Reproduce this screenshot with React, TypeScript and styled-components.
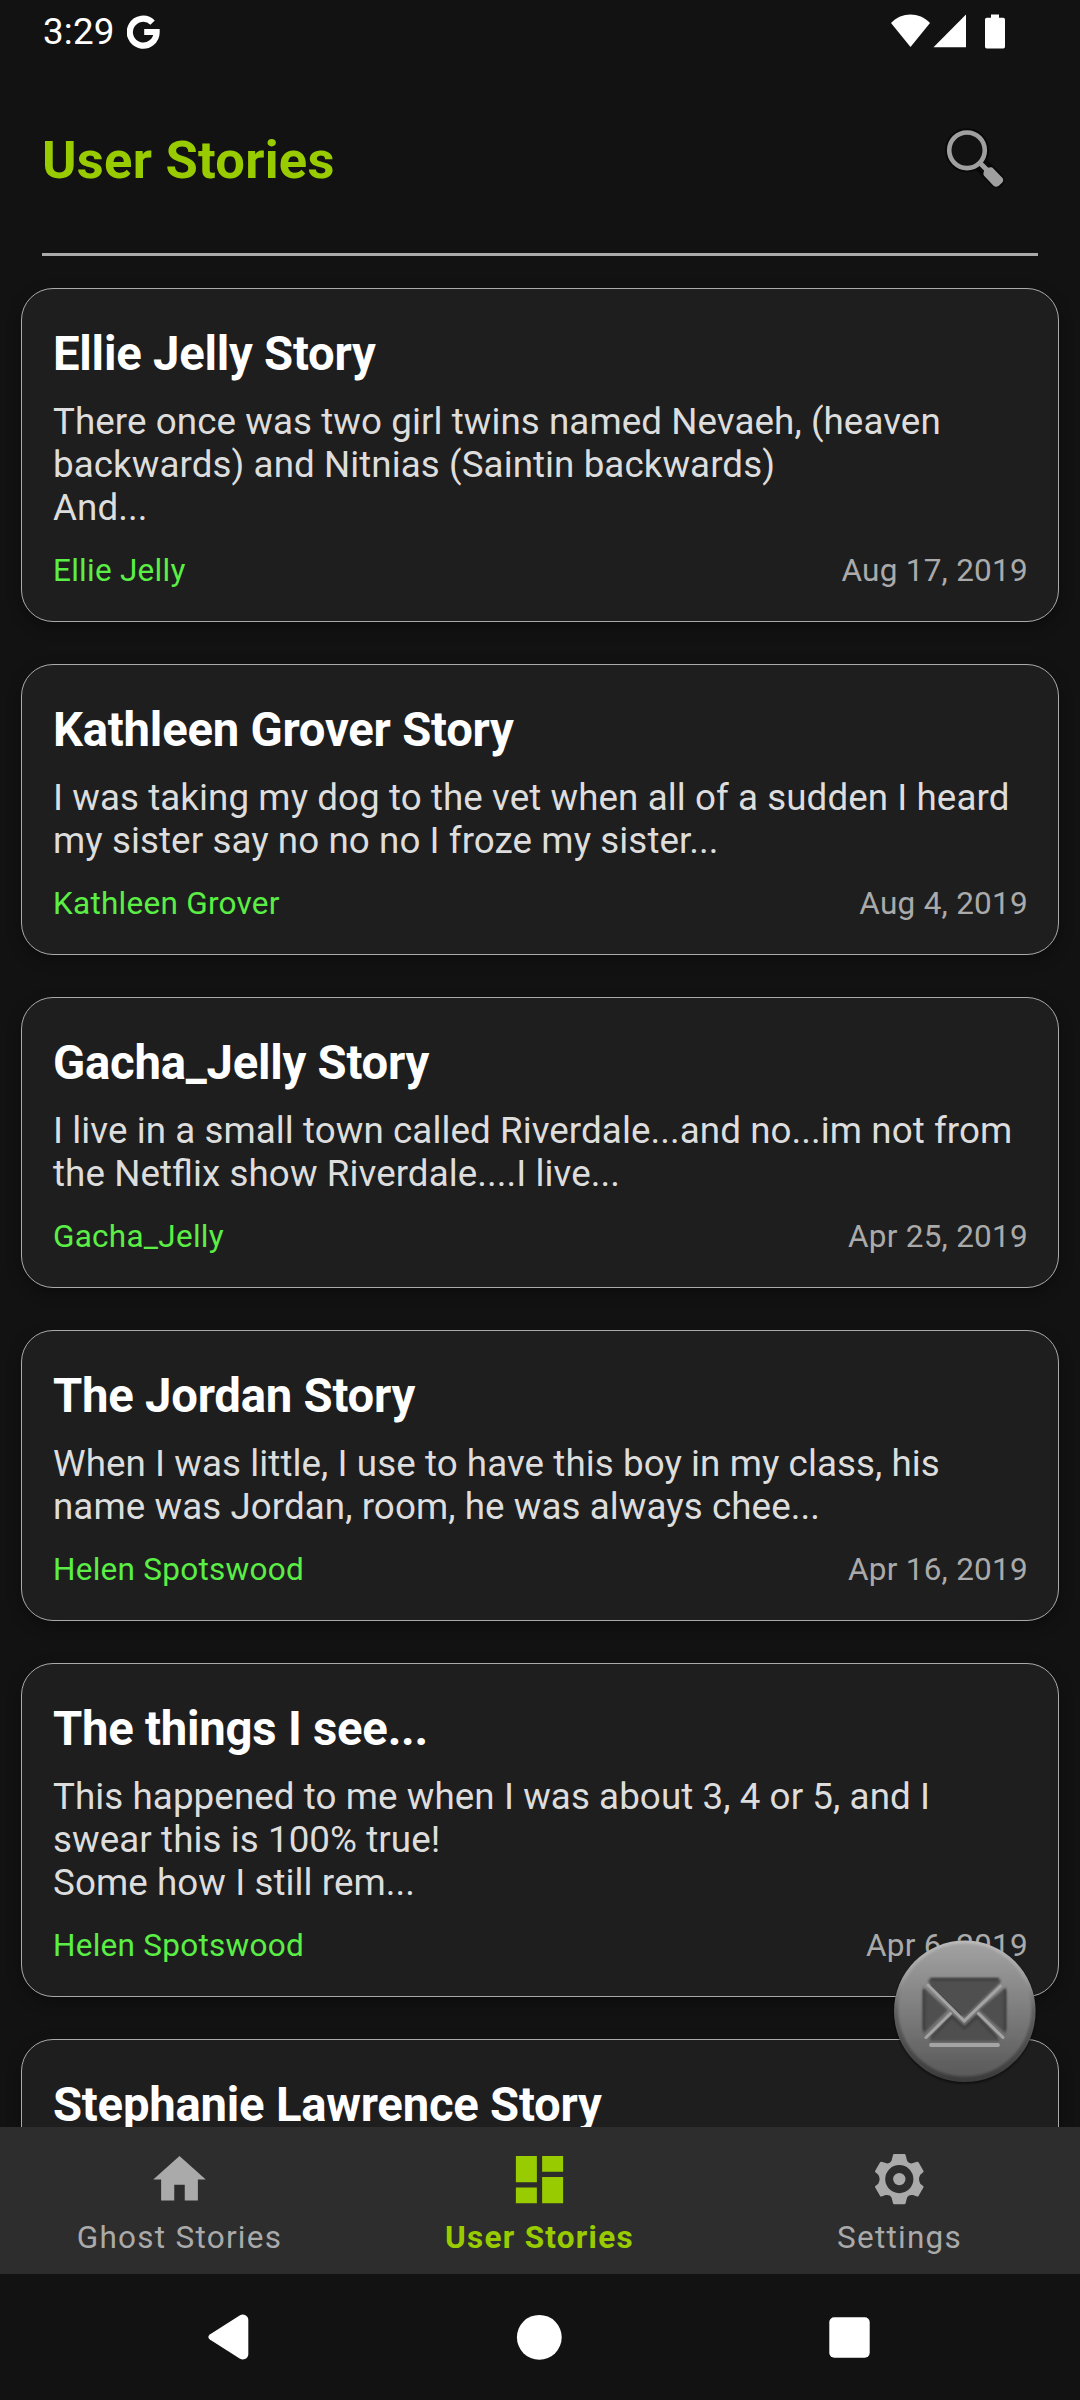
import React from 'react';
import styled, { createGlobalStyle } from 'styled-components';

const GlobalStyle = createGlobalStyle`
  * { box-sizing: border-box; margin: 0; padding: 0; }
  body { background: #121212; font-family: Roboto, sans-serif; }
  button { background: none; border: 0; font: inherit; color: inherit; }
`;

const Screen = styled.div`
  width: 1080px;
  height: 2400px;
  display: flex;
  flex-direction: column;
  overflow: hidden;
  background: #121212;
  position: relative;
`;

const StatusBar = styled.header`
  flex: none;
  height: 63px;
  padding: 0 74px 0 43px;
  display: flex;
  align-items: center;
  justify-content: space-between;
  color: #fff;
`;

const StatusGroup = styled.div`
  display: flex;
  align-items: center;
  svg { display: block; }
`;

const Clock = styled.span`
  font-size: 36.75px;
  line-height: 43px;
  width: 84px;
  letter-spacing: 0.2px;
  white-space: nowrap;
`;

const AppHeader = styled.div`
  flex: none;
  height: 193px;
  margin: 0 42px;
  padding: 61px 32px 0 0;
  border-bottom: 3px solid #aaa;
  display: flex;
  justify-content: space-between;
  align-items: flex-start;
`;

const HeaderTitle = styled.h1`
  font-size: 52.5px;
  line-height: 62px;
  font-weight: 700;
  letter-spacing: 0.25px;
  margin-top: 5px;
  color: #99cc00;
`;

const SearchButton = styled.button`
  width: 63px;
  height: 64px;
  margin-top: 2px;
  svg { display: block; }
`;

const StoryList = styled.main`
  flex: 1;
  min-height: 0;
  overflow: hidden;
  display: flex;
  flex-direction: column;
  gap: 42px;
  padding: 32px 21px 0;
`;

const Card = styled.article`
  flex: none;
  padding: 38px 31px 32px;
  border: 1px solid #aaa;
  border-radius: 32px;
  background: #1e1e1e;
  box-shadow: 0 5px 14px rgba(0, 0, 0, 0.35);
`;

const CardTitle = styled.h2`
  font-size: 47.25px;
  line-height: 55px;
  font-weight: 700;
  letter-spacing: -0.23px;
  color: #fff;
  white-space: nowrap;
`;

const Excerpt = styled.p`
  margin-top: 18px;
  font-size: 36.75px;
  line-height: 43px;
  letter-spacing: 0.07px;
  font-feature-settings: 'liga' 1;
  color: #ddd;
  white-space: pre;
`;

const Meta = styled.div`
  margin-top: 23px;
  margin-right: -1px;
  display: flex;
  justify-content: space-between;
  font-size: 31.5px;
  line-height: 37px;
  letter-spacing: 0.26px;
`;

const Author = styled.span`
  color: #5bef45;
`;

const PostedOn = styled.time`
  color: #aaa;
`;

const ComposeButton = styled.button`
  position: absolute;
  left: 890px;
  top: 1935px;
  width: 150px;
  height: 150px;
  svg { display: block; }
`;

const TabBar = styled.nav`
  flex: none;
  height: 147px;
  background: #2d2d2d;
  display: grid;
  grid-template-columns: repeat(3, 1fr);
`;

const Tab = styled.button<{ $active?: boolean }>`
  display: flex;
  flex-direction: column;
  align-items: center;
  padding: 21px 1px 0 0;
  color: ${(p) => (p.$active ? '#99cc00' : '#aaa')};
  font-weight: ${(p) => (p.$active ? 700 : 400)};
  svg { display: block; }
`;

const TabLabel = styled.span`
  margin-top: 8px;
  font-size: 31.5px;
  line-height: 37px;
  letter-spacing: 1.25px;
`;

const SystemNav = styled.footer`
  flex: none;
  height: 126px;
  padding: 0 210px 0 208px;
  display: flex;
  align-items: center;
  justify-content: space-between;
  color: #fff;
  svg { display: block; }
`;

type Story = { title: string; lines: string[]; author: string; date: string };

const stories: Story[] = [
  {
    title: 'Ellie Jelly Story',
    lines: [
      'There once was two girl twins named Nevaeh, (heaven',
      'backwards) and Nitnias (Saintin backwards)',
      'And...',
    ],
    author: 'Ellie Jelly',
    date: 'Aug 17, 2019',
  },
  {
    title: 'Kathleen Grover Story',
    lines: [
      'I was taking my dog to the vet when all of a sudden I heard',
      'my sister say no no no I froze my sister...',
    ],
    author: 'Kathleen Grover',
    date: 'Aug 4, 2019',
  },
  {
    title: 'Gacha_Jelly Story',
    lines: [
      'I live in a small town called Riverdale...and no...im not from',
      'the Netflix show Riverdale....I live...',
    ],
    author: 'Gacha_Jelly',
    date: 'Apr 25, 2019',
  },
  {
    title: 'The Jordan Story',
    lines: [
      'When I was little, I use to have this boy in my class, his',
      'name was Jordan, room, he was always chee...',
    ],
    author: 'Helen Spotswood',
    date: 'Apr 16, 2019',
  },
  {
    title: 'The things I see...',
    lines: [
      'This happened to me when I was about 3, 4 or 5, and I',
      'swear this is 100% true!',
      'Some how I still rem...',
    ],
    author: 'Helen Spotswood',
    date: 'Apr 6, 2019',
  },
  {
    title: 'Stephanie Lawrence Story',
    lines: ['', ''],
    author: '',
    date: '',
  },
];

const GoogleIcon = () => (
  <svg width="33" height="34" viewBox="0 0 33 34" fill="none" stroke="#fff" strokeWidth="6.2">
    <path d="M25.6 7.6A13.4 13.4 0 1 0 29.6 17H17.2" />
  </svg>
);

const StatusIcons = () => (
  <svg width="116" height="36" viewBox="890 13.5 116 36" fill="#fff">
    <path d="M891 22.5C902 11.3 919 11.3 930 22.5L910.5 46.5Z" />
    <path d="M933.5 46.8L966 14V46.8Z" />
    <path d="M991 14h8v3.3h4.2a1.8 1.8 0 0 1 1.8 1.8V46.2a1.8 1.8 0 0 1-1.8 1.8H986.8a1.8 1.8 0 0 1-1.8-1.8V19.1a1.8 1.8 0 0 1 1.8-1.8H991Z" />
  </svg>
);

const SearchIcon = () => (
  <svg width="63" height="64" viewBox="943 126 63 64" fill="none">
    <g stroke="#080808" strokeLinecap="round">
      <circle cx="967" cy="150.3" r="18" strokeWidth="8" />
      <path d="M980 163.5L997 180.5" strokeWidth="15" />
    </g>
    <circle cx="967" cy="150.3" r="17.8" fill="#121212" stroke="#a0a0a0" strokeWidth="4.6" />
    <path d="M979.5 162.5L987 170" stroke="#a0a0a0" strokeWidth="5" />
    <path
      d="M984.5 168.5L990.5 167.3Q992 167 993.3 168.4L1002.3 177.8Q1004.2 180 1002.3 182.5L998.5 186Q996 187.8 993.5 185.7L984.3 176Q983.2 174.8 983.4 173.4Z"
      fill="#a0a0a0"
    />
  </svg>
);

const MailIcon = () => (
  <svg width="150" height="150" viewBox="890 1935 150 150" fill="none">
    <defs>
      <linearGradient id="face" x1="0" y1="0" x2="0" y2="1">
        <stop offset="0" stopColor="#a2a2a2" />
        <stop offset="1" stopColor="#595959" />
      </linearGradient>
      <linearGradient id="rim" x1="0" y1="0" x2="0" y2="1">
        <stop offset="0" stopColor="#bcbcbc" />
        <stop offset="0.25" stopColor="#a0a0a0" />
        <stop offset="0.5" stopColor="#606060" />
        <stop offset="1" stopColor="#3a3a3a" />
      </linearGradient>
      <filter id="soft" x="-20%" y="-20%" width="140%" height="140%">
        <feGaussianBlur stdDeviation="1" />
      </filter>
    </defs>
    <circle cx="964.8" cy="2012.8" r="71" fill="#000" opacity="0.5" filter="url(#soft)" />
    <circle cx="964.8" cy="2011.3" r="70.8" fill="url(#rim)" />
    <circle cx="964.8" cy="2010" r="66.5" fill="url(#face)" filter="url(#soft)" />
    <g filter="url(#soft)">
      <path d="M930 1978H999L1001 1982L964.5 2017L928 1982Z" fill="#4f4f4f" />
      <path d="M923 1987L948 2010L923 2034Z" fill="#4f4f4f" />
      <path d="M1006 1987L979 2010L1006 2034Z" fill="#4f4f4f" />
      <path d="M929 2041L952 2014.5L964.5 2027L976 2014.5L1000 2041Z" fill="#4f4f4f" />
    </g>
    <g stroke="#3c3c3c" strokeWidth="2.5" filter="url(#soft)">
      <path d="M931 1979.5H998" />
      <path d="M930 1985L962 2016" />
      <path d="M931 2038L952 2016.5L964.5 2028L977 2016.5L997 2038" />
      <path d="M924 1990V2030" />
      <path d="M1005 1990V2030" />
    </g>
    <g stroke="#a4a4a4" strokeWidth="3" strokeLinecap="round" strokeLinejoin="round">
      <path d="M928 1985L964.2 2021L1000.5 1986" />
      <path d="M926 2037.5L950.5 2013.5" />
      <path d="M1003 2037.5L978.5 2013.5" />
      <path d="M931 2045H998" strokeWidth="3.8" />
    </g>
  </svg>
);

const HomeIcon = () => (
  <svg width="63" height="63" viewBox="0 0 24 24" fill="currentColor">
    <path d="M10 20v-6h4v6h5v-8h3L12 3 2 12h3v8z" />
  </svg>
);

const DashboardIcon = () => (
  <svg width="63" height="63" viewBox="0 0 24 24" fill="currentColor">
    <path d="M3 13h8V3H3v10zm0 8h8v-6H3v6zm10 0h8V11h-8v10zm0-18v6h8V3h-8z" />
  </svg>
);

const SettingsIcon = () => (
  <svg width="63" height="63" viewBox="0 0 63 63" fill="currentColor">
    <path
      fillRule="evenodd"
      d="M26.2 6H36.4Q37.3 6 37.6 6.9L39 12.6Q39.6 14.2 41 14.8Q43.2 15.8 45 15.1L49 13.7Q50 13.5 50.5 14.3L55.4 22.7Q55.9 23.6 55.2 24.2L52.3 26.7Q51 29 51 31Q51 33.5 52.3 35.7L55.2 38.1Q55.9 38.7 55.4 39.6L50.5 48Q50 48.8 49 48.5L45 47.1Q43.2 46.6 41 47.4Q39.6 48.2 39 49.8L37.6 55.3Q37.3 56.2 36.4 56.2H26.2Q25.3 56.2 25 55.3L23.6 49.8Q23 48.2 21.6 47.4Q19.4 46.6 17.6 47.1L13.6 48.5Q12.6 48.8 12.1 48L7.2 39.6Q6.7 38.7 7.4 38.1L10.3 35.7Q11.6 33.5 11.6 31Q11.6 29 10.3 26.7L7.4 24.2Q6.7 23.6 7.2 22.7L12.1 14.3Q12.6 13.5 13.6 13.7L17.6 15.1Q19.4 15.8 21.6 14.8Q23 14.2 23.6 12.6L25 6.9Q25.3 6 26.2 6Z M31.3 17A14.1 14.1 0 1 0 31.3 45.2A14.1 14.1 0 1 0 31.3 17Z"
    />
    <circle cx="31.3" cy="31.1" r="6.2" />
  </svg>
);

const BackIcon = () => (
  <svg width="41" height="46" viewBox="0 0 41 46" fill="#fff">
    <path d="M1.8 20.5L32 1.3Q34.5 0 37 1Q40.3 2.5 40.3 6V40Q40.3 43.5 37 45Q34.5 46 32 44.7L1.8 25.5Q-1.2 23 1.8 20.5Z" />
  </svg>
);

const HomeCircle = () => (
  <svg width="46" height="46" viewBox="0 0 46 46">
    <circle cx="23.3" cy="23.3" r="22.4" fill="#fff" />
  </svg>
);

const RecentsIcon = () => (
  <svg width="41" height="41" viewBox="0 0 41 41">
    <rect x="0.3" y="0.3" width="40.4" height="40.4" rx="5" fill="#fff" />
  </svg>
);

export default function App() {
  return (
    <Screen>
      <GlobalStyle />
      <StatusBar>
        <StatusGroup>
          <Clock>3:29</Clock>
          <GoogleIcon />
        </StatusGroup>
        <StatusGroup>
          <StatusIcons />
        </StatusGroup>
      </StatusBar>
      <AppHeader>
        <HeaderTitle>User Stories</HeaderTitle>
        <SearchButton aria-label="Search">
          <SearchIcon />
        </SearchButton>
      </AppHeader>
      <StoryList>
        {stories.map((s) => (
          <Card key={s.title}>
            <CardTitle>{s.title}</CardTitle>
            <Excerpt>{s.lines.join('\n')}</Excerpt>
            <Meta>
              <Author>{s.author}</Author>
              <PostedOn>{s.date}</PostedOn>
            </Meta>
          </Card>
        ))}
      </StoryList>
      <TabBar>
        <Tab>
          <HomeIcon />
          <TabLabel>Ghost Stories</TabLabel>
        </Tab>
        <Tab $active>
          <DashboardIcon />
          <TabLabel>User Stories</TabLabel>
        </Tab>
        <Tab>
          <SettingsIcon />
          <TabLabel>Settings</TabLabel>
        </Tab>
      </TabBar>
      <SystemNav>
        <BackIcon />
        <HomeCircle />
        <RecentsIcon />
      </SystemNav>
      <ComposeButton aria-label="Write a story">
        <MailIcon />
      </ComposeButton>
    </Screen>
  );
}
